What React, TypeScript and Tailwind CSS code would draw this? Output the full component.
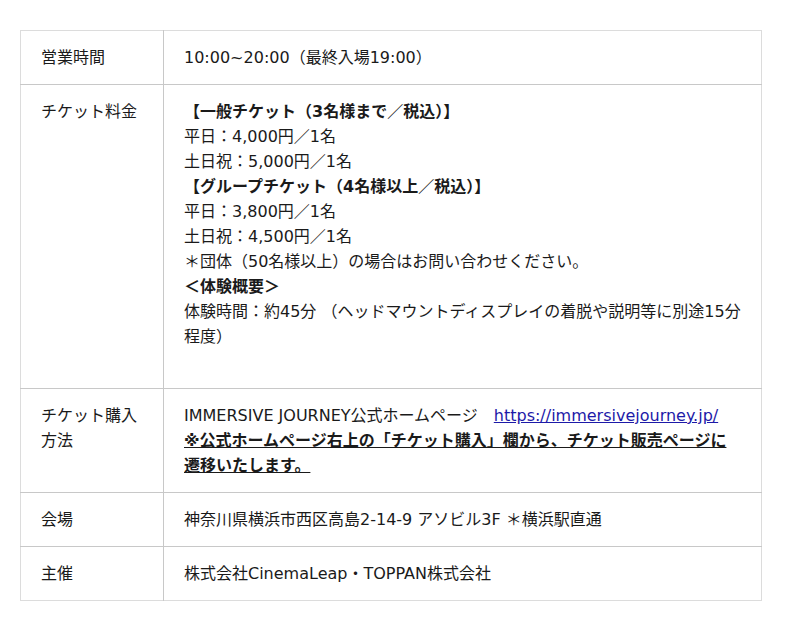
import React from "react"

const rows: { label: React.ReactNode; body: React.ReactNode }[] = [
	{ label: "営業時間", body: "10:00~20:00（最終入場19:00）" },
	{
		label: "チケット料金",
		body: (
			<>
				<b>【一般チケット（3名様まで／税込）】</b>
				<br />
				平日：4,000円／1名
				<br />
				土日祝：5,000円／1名
				<br />
				<b>【グループチケット（4名様以上／税込）】</b>
				<br />
				平日：3,800円／1名
				<br />
				土日祝：4,500円／1名
				<br />
				＊団体（50名様以上）の場合はお問い合わせください。
				<br />
				<b>＜体験概要＞</b>
				<br />
				体験時間：約45分 （ヘッドマウントディスプレイの着脱や説明等に別途15分程度）
				<br />
				<br />
			</>
		),
	},
	{
		label: "チケット購入方法",
		body: (
			<>
				IMMERSIVE JOURNEY公式ホームページ{"\u3000"}
				<a href="#" className="text-[#1d1aa8] underline">
					https://immersivejourney.jp/
				</a>
				<br />
				<b className="underline">
					※公式ホームページ右上の「チケット購入」欄から、チケット販売ページに遷移いたします。
				</b>
			</>
		),
	},
	{ label: "会場", body: "神奈川県横浜市西区高島2-14-9 アソビル3F ＊横浜駅直通" },
	{ label: "主催", body: "株式会社CinemaLeap・TOPPAN株式会社" },
]

export default function App() {
	return (
		<div className="min-h-[631px] bg-white pt-[30px] pl-[20px] font-['DejaVu_Sans','Noto_Sans_CJK_JP',sans-serif] text-[16px] leading-[25px] text-[#1a1a1a]">
			<table className="w-[742px] border-collapse border border-[#dcdcdc]">
				<tbody>
					{rows.map((row, i) => (
						<tr key={i} className="border-t border-[#c8c8c8] first:border-t-[#dcdcdc]">
							<td className="w-[143px] border-r border-[#c8c8c8] px-[20px] py-[14px] align-top">
								{row.label}
							</td>
							<td className="px-[20px] py-[14px] align-top">{row.body}</td>
						</tr>
					))}
				</tbody>
			</table>
		</div>
	)
}
